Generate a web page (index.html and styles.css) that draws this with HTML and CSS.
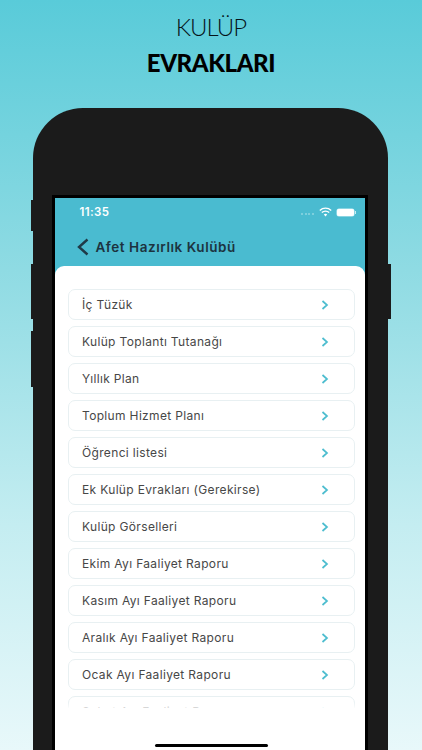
FILE: index.html
```html
<!DOCTYPE html>
<html lang="tr">
<head>
<meta charset="utf-8">
<title>Kulüp Evrakları</title>
<link rel="stylesheet" href="styles.css">
</head>
<body>
<header class="headline">
  <div class="headline-light">KULÜP</div>
  <div class="headline-bold">EVRAKLARI</div>
</header>
<div class="phone">
  <span class="btn btn-l1"></span>
  <span class="btn btn-l2"></span>
  <span class="btn btn-l3"></span>
  <span class="btn btn-r1"></span>
  <div class="bezel">
    <div class="screen">
      <div class="status">
        <span class="time">11:35</span>
        <span class="status-icons">
          <span class="dots"><i></i><i></i><i></i><i></i></span>
          <svg class="wifi" width="13" height="10" viewBox="0 0 13 10"><path d="M.8 3.400C4 .4 9 .4 12.200 3.400M2.800 5.500c2.100-1.800 5.300-1.800 7.400 0" fill="none" stroke="#fff" stroke-width="1.400"/><path d="M6.500 9.400 4.800 7.400c1-.8 2.400-.8 3.400 0z" fill="#fff"/></svg>
          <span class="battery"></span>
        </span>
      </div>
      <div class="navbar">
        <svg class="back" width="14" height="18" viewBox="0 0 14 18"><path d="M11.500 1.500 3 9l8.500 7.500" fill="none" stroke="#1f3a48" stroke-width="2.400"/></svg>
        <span class="nav-title">Afet Hazırlık Kulübü</span>
      </div>
      <main class="panel">
        <ul class="list">
          <li class="row"><span>İç Tüzük</span><svg class="chev" width="8" height="10" viewBox="0 0 8 10"><path d="M1.500 1 6 5 1.500 9" fill="none" stroke="#4dbdcf" stroke-width="1.700"/></svg></li>
          <li class="row"><span>Kulüp Toplantı Tutanağı</span><svg class="chev" width="8" height="10" viewBox="0 0 8 10"><path d="M1.500 1 6 5 1.500 9" fill="none" stroke="#4dbdcf" stroke-width="1.700"/></svg></li>
          <li class="row"><span>Yıllık Plan</span><svg class="chev" width="8" height="10" viewBox="0 0 8 10"><path d="M1.500 1 6 5 1.500 9" fill="none" stroke="#4dbdcf" stroke-width="1.700"/></svg></li>
          <li class="row"><span>Toplum Hizmet Planı</span><svg class="chev" width="8" height="10" viewBox="0 0 8 10"><path d="M1.500 1 6 5 1.500 9" fill="none" stroke="#4dbdcf" stroke-width="1.700"/></svg></li>
          <li class="row"><span>Öğrenci listesi</span><svg class="chev" width="8" height="10" viewBox="0 0 8 10"><path d="M1.500 1 6 5 1.500 9" fill="none" stroke="#4dbdcf" stroke-width="1.700"/></svg></li>
          <li class="row"><span>Ek Kulüp Evrakları (Gerekirse)</span><svg class="chev" width="8" height="10" viewBox="0 0 8 10"><path d="M1.500 1 6 5 1.500 9" fill="none" stroke="#4dbdcf" stroke-width="1.700"/></svg></li>
          <li class="row"><span>Kulüp Görselleri</span><svg class="chev" width="8" height="10" viewBox="0 0 8 10"><path d="M1.500 1 6 5 1.500 9" fill="none" stroke="#4dbdcf" stroke-width="1.700"/></svg></li>
          <li class="row"><span>Ekim Ayı Faaliyet Raporu</span><svg class="chev" width="8" height="10" viewBox="0 0 8 10"><path d="M1.500 1 6 5 1.500 9" fill="none" stroke="#4dbdcf" stroke-width="1.700"/></svg></li>
          <li class="row"><span>Kasım Ayı Faaliyet Raporu</span><svg class="chev" width="8" height="10" viewBox="0 0 8 10"><path d="M1.500 1 6 5 1.500 9" fill="none" stroke="#4dbdcf" stroke-width="1.700"/></svg></li>
          <li class="row"><span>Aralık Ayı Faaliyet Raporu</span><svg class="chev" width="8" height="10" viewBox="0 0 8 10"><path d="M1.500 1 6 5 1.500 9" fill="none" stroke="#4dbdcf" stroke-width="1.700"/></svg></li>
          <li class="row"><span>Ocak Ayı Faaliyet Raporu</span><svg class="chev" width="8" height="10" viewBox="0 0 8 10"><path d="M1.500 1 6 5 1.500 9" fill="none" stroke="#4dbdcf" stroke-width="1.700"/></svg></li>
          <li class="row"><span>Şubat Ayı Faaliyet Raporu</span><svg class="chev" width="8" height="10" viewBox="0 0 8 10"><path d="M1.500 1 6 5 1.500 9" fill="none" stroke="#4dbdcf" stroke-width="1.700"/></svg></li>
        </ul>
        <div class="home-bar"></div>
      </main>
    </div>
  </div>
</div>
</body>
</html>
```

FILE: styles.css
```css
* { box-sizing: border-box; }
html, body { margin: 0; height: 750px; }
body {
  width: 422px;
  overflow: hidden;
  background: linear-gradient(180deg, #59cbd9 0%, #8fdbe3 36%, #c4edf1 70%, #e8f8fa 100%);
  font-family: "Inter", "Liberation Sans", sans-serif;
  display: flex;
  flex-direction: column;
  align-items: center;
}
.headline { height: 108px; padding-top: 12px; text-align: center; color: #06141a; }
.headline-light { font-family: "Lato", sans-serif; font-weight: 300; font-size: 24px; line-height: 30px; letter-spacing: -1px; }
.headline-bold { font-family: "Lato", sans-serif; font-weight: 900; font-size: 24px; line-height: 30px; margin-top: 6px; color: #000; letter-spacing: -0.400px; }
.phone {
  position: relative;
  width: 355px;
  height: 642px;
  margin-left: -1px;
  background: #1b1b1b;
  border-radius: 50px 50px 0 0;
  padding: 87px 2px 0 0;
  display: flex;
  justify-content: center;
}
.btn { position: absolute; background: #1b1b1b; }
.btn-l1 { left: -2.500px; top: 92px; width: 3px; height: 31px; }
.btn-l2 { left: -2.500px; top: 156px; width: 3px; height: 55px; }
.btn-l3 { left: -2.500px; top: 223px; width: 3px; height: 56px; }
.btn-r1 { right: -3px; top: 156px; width: 3px; height: 55px; }
.bezel { width: 316px; height: 555px; background: #000; padding: 3px 3px 0; }
.screen { height: 552px; background: #4abbd0; display: flex; flex-direction: column; }
.status { height: 29px; padding: 7px 11px 0 25px; display: flex; justify-content: space-between; align-items: flex-start; color: #fff; }
.time { font-size: 11.500px; line-height: 14px; font-weight: 600; letter-spacing: 0.400px; }
.status-icons { display: flex; align-items: center; gap: 5px; height: 14px; }
.dots { display: flex; gap: 1.500px; margin-right: 0; padding-top: 3px; }
.dots i { width: 2px; height: 2px; border-radius: 50%; background: #8fd6e2; }
.battery { position: relative; width: 17px; height: 7px; background: #fff; border-radius: 2px; box-shadow: 0 0 0 0.500px #c8eef4; }
.battery::after { content: ""; position: absolute; right: -2px; top: 2px; width: 1px; height: 3px; background: #c8eef4; }
.navbar { height: 39px; display: flex; align-items: center; padding: 0 0 0 21px; gap: 6px; }
.nav-title { font-size: 13.500px; font-weight: 600; color: #1c3340; letter-spacing: 0.550px; }
.panel { position: relative; flex: 1; background: #fff; border-radius: 9px 9px 0 0; padding: 23px 10px 0 13px; }
.list { position: relative; list-style: none; margin: 0; padding: 0; height: 419px; overflow: hidden; display: flex; flex-direction: column; gap: 6px; }
.list::after { content: ""; position: absolute; left: 0; right: 0; bottom: 0; height: 6px; background: linear-gradient(180deg, rgba(255,255,255,0), rgba(255,255,255,.85)); }
.row {
  flex: none;
  height: 31px;
  border: 1px solid #e8f0f2;
  border-radius: 7px;
  padding: 0 25px 0 13.500px;
  display: flex;
  align-items: center;
  justify-content: space-between;
  font-size: 12px;
  font-weight: 400;
  color: #474747;
  letter-spacing: 0.340px;
}
.home-bar { position: absolute; left: 100px; bottom: 3px; width: 113px; height: 3px; border-radius: 2px; background: #000; }
```
